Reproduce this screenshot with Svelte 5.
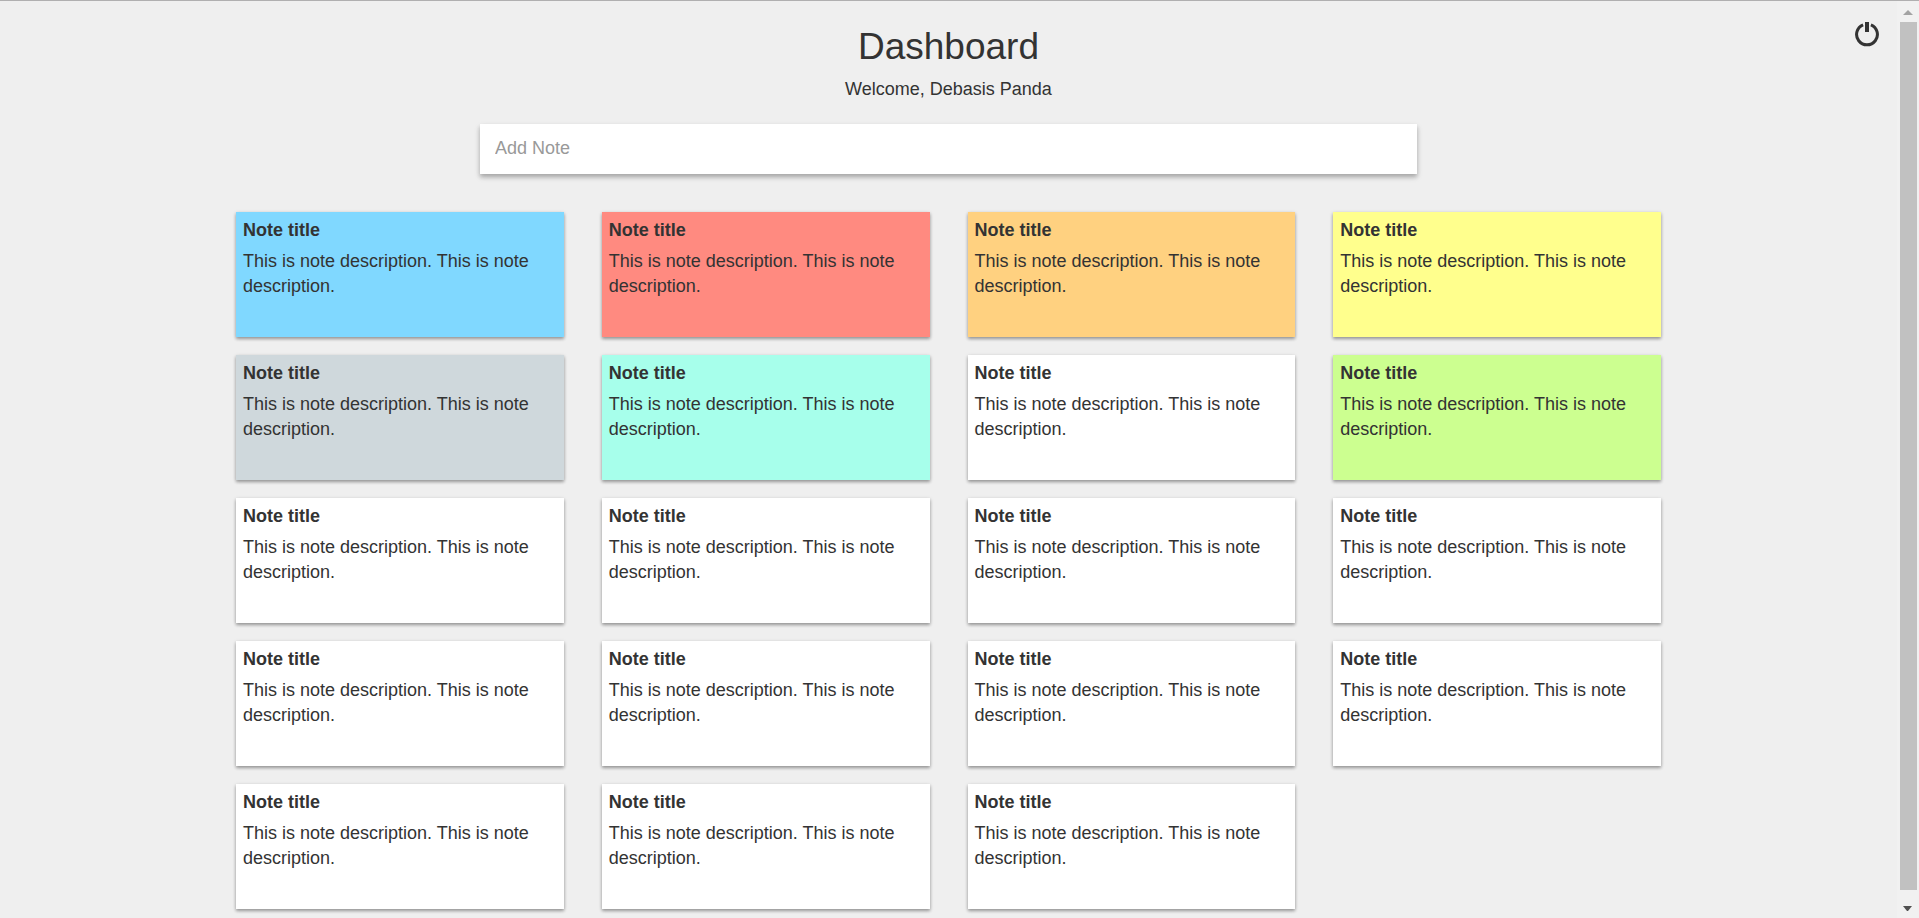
<script>
  const tints = ['blue', 'red', 'orange', 'yellow', 'grey', 'teal', 'white', 'green'];
  const notes = Array.from({ length: 19 }, (_, i) => ({
    id: i,
    title: 'Note title',
    text: 'This is note description. This is note description.',
    tint: tints[i] ?? 'white'
  }));
  let draft = $state('');
</script>

<div class="page">
  <div class="content">
    <header>
      <h1>Dashboard</h1>
      <p>Welcome, Debasis Panda</p>
      <button class="power" type="button" aria-label="Log out">
        <svg viewBox="0 0 26 26" width="26" height="26" aria-hidden="true">
          <path d="M9.1 2.8A10.4 10.4 0 1 0 16.9 2.8" fill="none" stroke="currentColor" stroke-width="3" />
          <rect x="11" y="0" width="4" height="10" fill="currentColor" />
        </svg>
      </button>
    </header>
    <main>
      <input type="text" placeholder="Add Note" aria-label="Add Note" bind:value={draft} />
      <section class="notes">
        {#each notes as note (note.id)}
          <article class={note.tint}>
            <h2>{note.title}</h2>
            <p>{note.text}</p>
          </article>
        {/each}
      </section>
    </main>
  </div>
  <div class="scrollbar" aria-hidden="true">
    <svg viewBox="0 0 10 6" width="10" height="6"><path d="M5 0L10 5H0Z" fill="#a3a3a3" /></svg>
    <div class="thumb"></div>
    <svg viewBox="0 0 10 6" width="10" height="6"><path d="M0 0H9L5 5H4Z" fill="#505050" /></svg>
  </div>
</div>

<style>
  :global(body) {
    background: #efefef;
  }
  .page {
    box-sizing: border-box;
    display: flex;
    height: 100vh;
    overflow: hidden;
    border-top: 1px solid #b0afb0;
    color: #333;
    font: 18px/25px "Liberation Sans", Arial, sans-serif;
  }
  h1, h2, p {
    margin: 0;
  }
  .content {
    flex: 1;
    min-width: 0;
  }
  header {
    position: relative;
    padding-top: 25px;
    text-align: center;
  }
  h1 {
    margin-bottom: 10px;
    font-size: 37px;
    line-height: 41px;
    font-weight: 400;
  }
  .power {
    position: absolute;
    top: 21px;
    right: 17px;
    padding: 0;
    border: 0;
    background: none;
    color: #333;
    line-height: 0;
    cursor: pointer;
  }
  main {
    display: flex;
    flex-direction: column;
    align-items: center;
    max-width: 1425px;
    margin: 0 auto;
    padding-top: 22px;
  }
  input {
    box-sizing: border-box;
    width: 100%;
    max-width: 937px;
    height: 50px;
    padding: 0 15px 2px;
    border: 0;
    border-radius: 0;
    outline: 0;
    background: #fff;
    color: #333;
    font: inherit;
    box-shadow: 0 3px 6px rgba(0, 0, 0, 0.16), 0 3px 4px rgba(0, 0, 0, 0.18);
  }
  input::placeholder {
    color: #999;
    opacity: 1;
  }
  .notes {
    display: grid;
    grid-template-columns: repeat(4, 1fr);
    gap: 18px 38px;
    width: 100%;
    margin-top: 38px;
  }
  article {
    box-sizing: border-box;
    min-height: 125px;
    padding: 6px 7px;
    box-shadow: 0 1px 4px rgba(0, 0, 0, 0.14), 0 2px 3px rgba(0, 0, 0, 0.3);
  }
  h2 {
    margin-bottom: 6px;
    font-size: 18px;
    line-height: 25px;
    font-weight: 700;
  }
  .blue { background: #80d8ff; }
  .red { background: #ff8a80; }
  .orange { background: #ffd180; }
  .yellow { background: #ffff8d; }
  .grey { background: #cfd8dc; }
  .teal { background: #a7ffeb; }
  .white { background: #fff; }
  .green { background: #ccff90; }
  .scrollbar {
    box-sizing: border-box;
    display: flex;
    flex-direction: column;
    align-items: center;
    gap: 6px;
    width: 22px;
    padding: 9px 0 6px;
    background: #f1f1f1;
  }
  .thumb {
    flex: 1;
    width: 17px;
    margin-bottom: 10px;
    background: #c1c1c1;
  }
</style>
